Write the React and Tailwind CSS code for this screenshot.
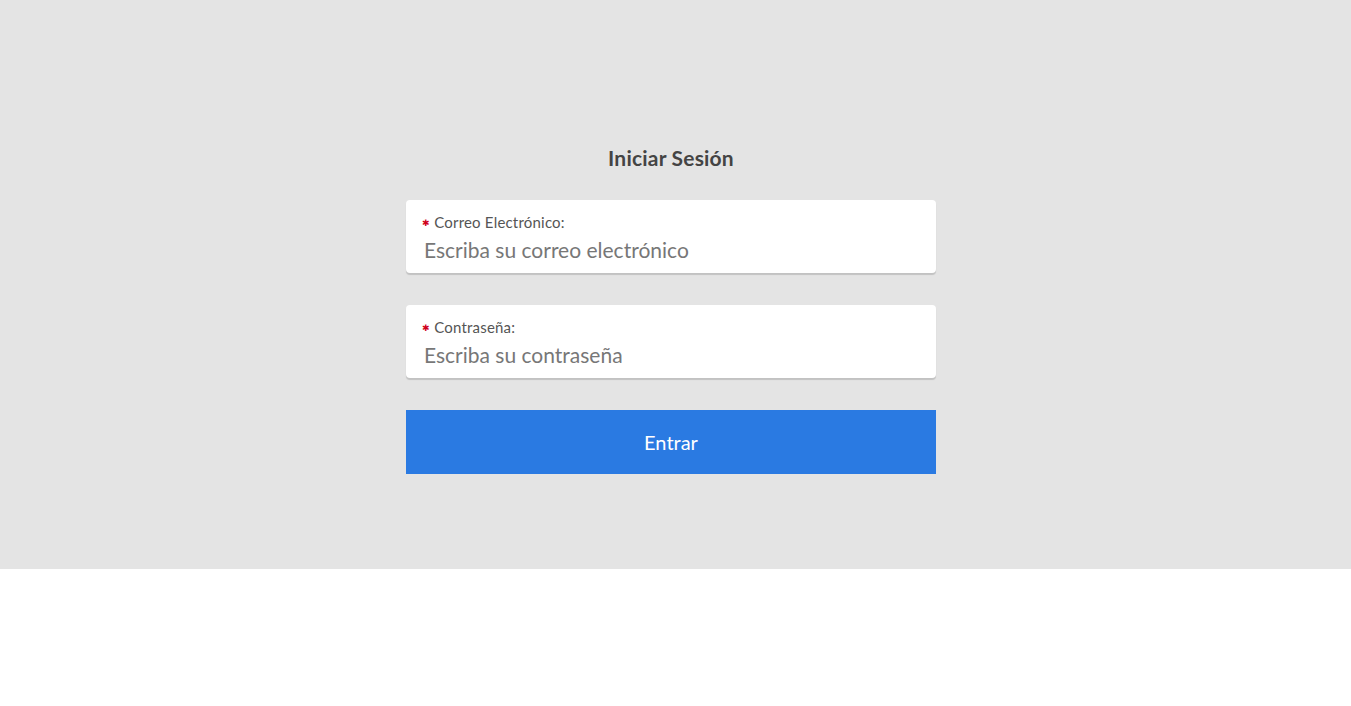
import React from "react";

function Field({ label, placeholder, type = "text", autoFocus = false }) {
  return (
    <label className="flex flex-col rounded bg-white pl-[18px] pr-4 pt-[12px] pb-[9px] shadow-[0_2px_1px_rgba(0,0,0,0.15)]">
      <span className="flex items-center text-[15px] leading-5 tracking-[0.2px] text-[#555]">
        <span className="ml-[-2px] mr-[4px] text-[9px] leading-none text-[#d0021b]">✱</span>
        {label}
      </span>
      <input
        type={type}
        placeholder={placeholder}
        autoFocus={autoFocus}
        className="mt-[4px] h-7 w-full bg-transparent text-[21px] leading-7 text-[#333] caret-[#333] outline-none placeholder:text-[#777]"
      />
    </label>
  );
}

export default function App() {
  return (
    <div className="min-h-screen bg-white font-['Lato','Open_Sans',sans-serif]">
      <div className="flex h-[569px] flex-col items-center bg-[#e4e4e4] pr-[9px] pt-[144px]">
        <h1 className="mb-[28px] text-[21px] font-bold leading-7 tracking-[0.2px] text-[#444]">
          Iniciar Sesión
        </h1>
        <form
          className="flex w-[530px] flex-col gap-[32px]"
          onSubmit={(e) => e.preventDefault()}
        >
          <Field
            label="Correo Electrónico:"
            placeholder="Escriba su correo electrónico"
            type="email"
            autoFocus
          />
          <Field label="Contraseña:" placeholder="Escriba su contraseña" type="password" />
          <button
            type="submit"
            className="h-[64px] bg-[#2a7ae2] text-[20px] text-white"
          >
            Entrar
          </button>
        </form>
      </div>
    </div>
  );
}
